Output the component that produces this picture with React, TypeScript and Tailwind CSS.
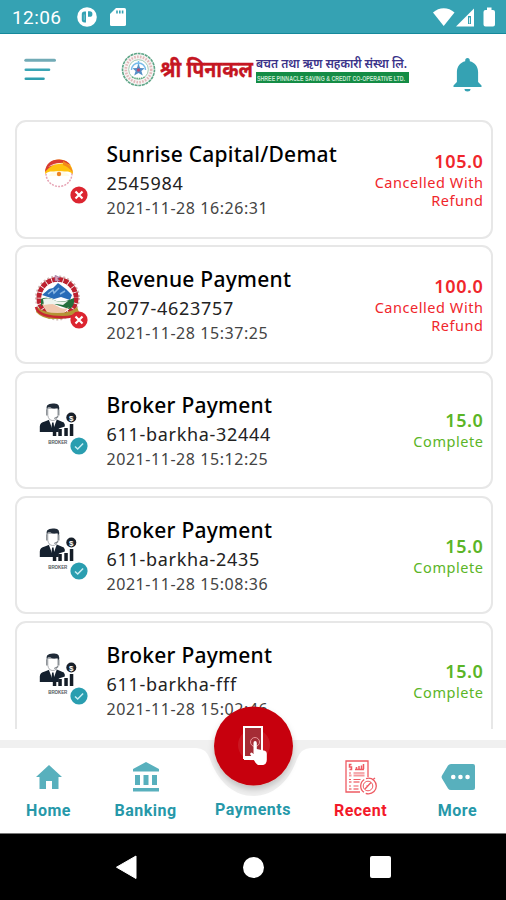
import React from "react";

type Kind = "sunrise" | "revenue" | "broker";
type Payment = { kind: Kind; title: string; account: string; date: string; amount: string; status: string };

const payments: Payment[] = [
  { kind: "sunrise", title: "Sunrise Capital/Demat", account: "2545984", date: "2021-11-28 16:26:31", amount: "105.0", status: "Cancelled With Refund" },
  { kind: "revenue", title: "Revenue Payment", account: "2077-4623757", date: "2021-11-28 15:37:25", amount: "100.0", status: "Cancelled With Refund" },
  { kind: "broker", title: "Broker Payment", account: "611-barkha-32444", date: "2021-11-28 15:12:25", amount: "15.0", status: "Complete" },
  { kind: "broker", title: "Broker Payment", account: "611-barkha-2435", date: "2021-11-28 15:08:36", amount: "15.0", status: "Complete" },
  { kind: "broker", title: "Broker Payment", account: "611-barkha-fff", date: "2021-11-28 15:02:46", amount: "15.0", status: "Complete" },
];

function StatusBar() {
  return (
    <div className="flex h-[34px] shrink-0 items-center border-b border-[#16899b] bg-[#35a2b3] pl-3 pr-[10px] text-white">
      <span className="w-[65px] pt-px font-['Roboto',sans-serif] text-[19px] leading-none tracking-[0.4px]">12:06</span>
      <svg width="20" height="20" viewBox="0 0 20 20">
        <circle cx="10" cy="10" r="9.8" fill="#fff" />
        <path d="M9 4.5H7.5A2.7 2.7 0 0 0 4.8 7.2v5.600a2.700 2.700 0 0 0 2.700 2.700H9z" fill="#35a2b3" />
        <path d="M6.800 7.500h.7v5.500h-.7z" fill="#fff" opacity=".5" />
        <path d="M11 4.200h1.800a2.600 2.600 0 0 1 2.600 2.600v.4a2.600 2.600 0 0 1-2.600 2.600H11z" fill="#35a2b3" />
      </svg>
      <svg className="ml-[13px]" width="16" height="18" viewBox="0 0 16 18">
        <path d="M6 0h8.400A1.600 1.600 0 0 1 16 1.600v14.800A1.600 1.600 0 0 1 14.400 18H1.600A1.600 1.600 0 0 1 0 16.400V6z" fill="#fff" />
        <path d="M6.200 2.500h1.600v3H6.200zM9 2.500h1.600v3H9zM11.800 2.500h1.600v3h-1.600z" fill="#35a2b3" />
      </svg>
      <svg className="ml-auto" width="64" height="20" viewBox="0 0 64 20">
        <path d="M1 5.500C7-.2 16.500-.2 22.500 5.500L11.700 19z" fill="#fff" />
        <path d="M42 1.500V19.500H24z" fill="#fff" />
        <path d="M36 9h3v8h-3z" fill="#35a2b3" />
        <path d="M37.200 10.500h.8v6h-.8z" fill="#fff" />
        <path d="M55 .5h4.500V3H61a2 2 0 0 1 2 2v12.500a2 2 0 0 1-2 2h-7.500a2 2 0 0 1-2-2V5a2 2 0 0 1 2-2H55z" fill="#fff" />
      </svg>
    </div>
  );
}

function Header() {
  return (
    <header className="flex h-[86px] shrink-0 items-start px-6">
      <svg className="mt-[24px] shrink-0" width="32" height="24" viewBox="0 0 32 24" strokeWidth="2.600" strokeLinecap="round">
        <path d="M1.800 2.300H30.500" stroke="#72abb6" strokeWidth="3" />
        <path d="M1.800 11.700H25" stroke="#3aa5b5" />
        <path d="M1.800 20.800H19.500" stroke="#2f9faf" />
      </svg>
      <svg className="ml-[65px] mt-[18px] shrink-0" width="35" height="35" viewBox="0 0 35 35" fill="none">
        <circle cx="17.500" cy="17.500" r="16" fill="#f6f5f4" stroke="#5fa688" strokeWidth="1.600" strokeDasharray="3 .7" />
        <circle cx="17.500" cy="17.500" r="12.700" stroke="#e2b7b9" strokeWidth="2.600" strokeDasharray="1.600 1.300" />
        <circle cx="17.500" cy="17.500" r="9.800" fill="#fff" stroke="#8fc0a5" strokeWidth=".8" />
        <path d="M10.500 18a7 7 0 0 1 14 0M17.500 9v5" stroke="#78bceb" strokeWidth="1.500" />
        <path d="m17.500 12 1.700 4 4.500.2-3.300 2.900 1.400 4.300-4.300-2.400-4.300 2.400 1.400-4.300-3.300-2.900 4.500-.2z" fill="#568fc7" />
        <circle cx="17.500" cy="18" r="1.700" fill="#b34f77" />
        <path d="M11 25q6.500 3 13 0" stroke="#62ad83" strokeWidth="1.500" strokeDasharray="1.500 .8" />
      </svg>
      <svg className="ml-1 mt-[18px] shrink-0" width="254" height="38" viewBox="0 0 254 38">
        <text x="0" y="25" fill="#c51622" stroke="#c51622" strokeWidth=".3" fontSize="23" fontWeight="700" textLength="93" lengthAdjust="spacingAndGlyphs" fontFamily="'Noto Sans Devanagari','Noto Sans','FreeSans',sans-serif">श्री पिनाकल</text>
        <text x="96" y="16" fill="#3a3289" fontSize="12" fontWeight="600" textLength="151" lengthAdjust="spacingAndGlyphs" fontFamily="'Noto Sans Devanagari','Noto Sans','FreeSans',sans-serif">बचत तथा ऋण सहकारी संस्था लि.</text>
        <rect x="96" y="20" width="153" height="11" fill="#148c45" />
        <text x="97" y="28.500" fill="#c4e6cf" fontSize="7.500" fontWeight="700" textLength="148" lengthAdjust="spacingAndGlyphs" fontFamily="'Liberation Sans',sans-serif">SHREE PINNACLE SAVING &amp; CREDIT CO-OPERATIVE LTD.</text>
      </svg>
      <svg className="ml-auto mt-[24px] shrink-0" width="29" height="34" viewBox="0 0 29 34" fill="#35a2b3">
        <path d="M14.500 0c1.500 0 2.300 1 2.300 2.500v.7c5 1.200 8.300 5.500 8.300 10.800V24l3.400 3.400V29H.5v-1.600L3.900 24V14c0-5.300 3.300-9.600 8.300-10.800v-.7C12.200 1 13 0 14.500 0zM11.500 31h6a3 2.500 0 0 1-6 0z" />
      </svg>
    </header>
  );
}

function Art({ kind }: { kind: Kind }) {
  if (kind === "sunrise")
    return (
      <svg width="60" height="60" viewBox="0 0 60 60" fill="none">
        <circle cx="30" cy="30.500" r="13" stroke="#e6a3b4" strokeWidth="1.500" strokeDasharray="2 1.200" />
        <path d="M16 31C16 22 22 16.500 30 16.500S44 22 44 31q-2-2-5-2.500H21q-3 .5-5 2.500z" fill="#ffc20e" />
        <path d="M16 29C16.500 21 22 16.500 30 16.500q8 0 12 6c-7-4.500-17-4-26 6.500z" fill="#d83b31" />
        <path d="M19 24q9-6.500 20-2.500-9-2.500-20 2.500z" fill="#fff" opacity=".8" />
        <path d="M34 18q8 3 10 12-4-6-10-8z" fill="#f38b1c" />
        <path d="M19.500 33C22 26.500 38 26.500 40.500 33z" fill="#fffbe8" />
        <circle cx="30" cy="31" r="2.200" fill="#ed8424" />
      </svg>
    );
  if (kind === "revenue")
    return (
      <svg width="60" height="60" viewBox="0 0 60 60" fill="none">
        <circle cx="28.500" cy="30" r="21" stroke="#d2b8b4" strokeWidth="3" strokeDasharray="2 2" />
        <circle cx="28.500" cy="30" r="18.500" stroke="#bd2230" strokeWidth="5" strokeDasharray="5 .8" />
        <circle cx="28.500" cy="30" r="16" fill="#fff" />
        <path d="m13 27 7-6 4-1 5-5 8 6 6 6-2 5-9-3-7 2-6-2z" fill="#286cb8" />
        <path d="m19 26 5-4 1 3 5-5M31 26l5-3" stroke="#8ab8e3" strokeWidth="1.500" />
        <path d="M12 31q6-3 13 1t20-2q1 9-5 11-9-3-15-5t-13 2z" fill="#246f3c" />
        <path d="M13 36q8-3 15 2t12 1l-6 7H19z" fill="#efc6ad" />
        <path d="M14 31q7-2 11 1t14 1l-5 4q-9-2-19 0z" fill="#eef4ee" />
        <path d="M8 39q7 6 20.500 6T48 39l2 5q-7 6-21.500 7T7 44z" fill="#b49535" />
        <path d="M7 39q2 9 21.500 10T47 44" stroke="#c72730" strokeWidth="2.500" />
        <path d="M26 7.500l5 2-3 1 3 2.500h-5z" fill="#e39daf" stroke="#7f66a1" strokeWidth=".6" />
      </svg>
    );
  return (
    <svg width="60" height="60" viewBox="0 0 60 60">
      <g transform="translate(.8 -4.500)">
        <path d="M10 42.500V37q0-4 5-5l5-2h7l7 3 1 2v2l-6 2v3.500z" fill="#15212f" />
        <path d="m19 30 4 11 4-11z" fill="#fff" />
        <path d="m22.300 33 1.500 0 .8 7-1.600 2-1.500-2z" fill="#15212f" />
        <path d="M18 19v7q1 5 5 5t5-5v-7z" fill="#fff" stroke="#9a9ea3" strokeWidth=".8" />
        <path d="M17 21q-2-7 6-7 8-1 6 7l-1.500-2.500q-4 1-7-.5L18 18z" fill="#202b38" />
        <path d="M17 20v6M29 20v6M28.500 27l-4 2" stroke="#777d83" strokeWidth="1.200" />
        <circle cx="41.500" cy="28" r="5" fill="#171f29" />
        <text x="41.500" y="31.200" fill="#fff" textAnchor="middle" fontSize="8" fontWeight="700" fontFamily="'Liberation Sans',sans-serif">$</text>
        <path d="M23 42h3.500v4.500H23zM28.500 39.500H32v7h-3.500zM34.500 38.500H38v8h-3.500zM40 34.500h3.500v12H40z" fill="#151d27" />
        <text x="18.500" y="54" fill="#555b61" fontSize="4.500" fontWeight="700" textLength="19" fontFamily="'Liberation Sans',sans-serif">BROKER</text>
      </g>
    </svg>
  );
}

function PaymentCard({ p }: { p: Payment }) {
  const done = p.status === "Complete";
  return (
    <article className="flex h-[118.500px] shrink-0 rounded-[11px] border-2 border-[#e7e7e7] bg-white font-['Noto_Sans','Open_Sans',sans-serif]">
      <div className="relative ml-[12px] mt-[21px] h-[62px] w-[78px] shrink-0">
        <Art kind={p.kind} />
        <svg className="absolute left-[41px] top-[43px]" width="18" height="18" viewBox="0 0 18 18">
          <circle cx="9" cy="9" r="8.600" fill={done ? "#2a9eb0" : "#dc2530"} />
          {done ? (
            <path d="m5 9.500 2.700 2.500 5.400-5.500" fill="none" stroke="#c9eef4" strokeWidth="1.500" />
          ) : (
            <path d="m5.500 5.500 7 7m0-7-7 7" stroke="#fff" strokeWidth="2.200" />
          )}
        </svg>
      </div>
      <div className="flex flex-col whitespace-nowrap pt-[17px] text-black">
        <h2 className="text-[21px] font-medium leading-[30px] tracking-[0.25px]">{p.title}</h2>
        <p className="text-[18px] leading-[28px] tracking-[0.7px] text-[#222]">{p.account}</p>
        <p className="text-[16px] leading-[22px] tracking-[0.55px] text-[#444]">{p.date}</p>
      </div>
      <div className={"ml-auto mr-[7px] flex w-[125px] flex-col justify-center text-right " + (done ? "text-[#5bb527]" : "text-[#f0262c]")}>
        <strong className="text-[18px] font-semibold leading-[23px] tracking-[0.600px]">{p.amount}</strong>
        <span className="text-[14.500px] leading-[18px] tracking-[0.55px]">{p.status}</span>
      </div>
    </article>
  );
}

function NavItem({ label, icon, active, width }: { label: string; icon: React.ReactNode; active?: boolean; width: string }) {
  return (
    <div className={"flex flex-col items-center " + width + (active ? " text-[#f31929]" : " text-[#2698a9]")}>
      <div className="flex h-[46px] items-center justify-center">{icon}</div>
      <span className="mt-px text-[16px] font-bold leading-[20px] tracking-[0.5px]">{label}</span>
    </div>
  );
}

function BottomNav() {
  return (
    <nav className="relative h-[93px] shrink-0 font-['Roboto',sans-serif]">
      <svg className="absolute left-0 top-0" width="506" height="93" viewBox="0 0 506 93">
        <defs>
          <filter id="fabShade" x="-20%" y="-20%" width="140%" height="150%">
            <feDropShadow dx="0" dy="4" stdDeviation="3" floodOpacity=".2" />
          </filter>
        </defs>
        <path d="M0 0H506V93H0z" fill="#f0f0f0" />
        <path d="M0 8H196Q206 8 210 19C218 42 234 56 253.500 56S289 42 297 19Q301 8 311 8H506V93H0z" fill="#fff" />
      </svg>
      <svg className="absolute left-[204px] top-[-44px]" width="100" height="108" viewBox="0 0 100 108">
        <circle cx="49.500" cy="50" r="39.500" fill="#c70009" filter="url(#fabShade)" />
        <circle cx="50" cy="49" r="16" fill="#d34a4f" opacity=".3" />
        <path d="M40 31h18v31H40z" fill="#a52c35" stroke="#fff" strokeWidth="2" />
        <path d="M40 60h11v4H40z" fill="#fff" />
        <circle cx="51" cy="46" r="4.500" fill="none" stroke="#e79498" strokeWidth="1" />
        <path d="M49.500 47q0-2 1.600-2t1.700 2v6l8 1.800q2 .6 2 3V64q0 4-3.500 5H54q-2-1-3.500-4L46 58q1-3 3.500 0z" fill="#fff" />
      </svg>
      <div className="relative flex h-full pt-[14px]">
        <NavItem width="w-[97px]" label="Home" icon={<svg width="28" height="28" viewBox="0 0 28 28"><path d="M14 2 1 14h3.500v12H11v-8h6v8h6.500V14H27z" fill="#58b0bd" /></svg>} />
        <NavItem width="w-[97px]" label="Banking" icon={<svg width="28" height="32" viewBox="0 0 28 32"><path d="M14 1 1 8v2.500h26V8zM3 14h5v10H3zM11.500 14h5v10h-5zM20 14h5v10h-5zM1 27h26v3.500H1z" fill="#58b0bd" /></svg>} />
        <div className="flex w-[118px] flex-col items-center pt-[46px] text-[16px] font-bold leading-[20px] tracking-[0.5px] text-[#2698a9]">Payments</div>
        <NavItem width="w-[97px]" label="Recent" active icon={
          <svg width="34" height="36" viewBox="0 0 34 36" fill="none" stroke="#ee5b63" strokeWidth="1.300">
            <path d="M24 18V2H2v31h14" />
            <path d="M7.500 5.500H5.500v2.500h2v2.500h-2" strokeWidth="1.500" />
            <path d="M11 10.500h9M12.500 10V8m2.500 2V7m2.500 3V6.500m2 3.500V5" strokeWidth="1.500" />
            <path d="M5 14h2M9.500 14h11M5 20.500h2M9.500 20.500h7M5 27h2M9.500 27h5" strokeWidth="1.200" />
            <path d="M5 16.500h2.500M9.500 16.500h11M5 23h2.500M9.500 23h6M5 30h2.500M9.500 30h5" stroke="#f5999e" strokeWidth="2.200" />
            <circle cx="24.500" cy="27" r="7.800" fill="#fff" strokeDasharray="15 2" />
            <circle cx="24" cy="27" r="4.800" strokeWidth="1" />
            <path d="m21 30 6-6.500M24 27h-1.500M29 20.500l2-1.500" />
          </svg>} />
        <NavItem width="w-[97px]" label="More" icon={<svg width="34" height="26" viewBox="0 0 34 26"><path d="M10 0H32q2 0 2 2V24q0 2-2 2H10q-2 0-3-1.500L1 14.500q-1-1.500 0-3L7 1.500Q8 0 10 0z" fill="#58b0bd" /><path d="M12.200 13h.1m7.100 0h.1m7 0h.1" stroke="#fff" strokeWidth="4.500" strokeLinecap="round" /></svg>} />
      </div>
    </nav>
  );
}

export default function App() {
  return (
    <main className="flex h-[900px] w-[506px] flex-col overflow-hidden bg-white">
      <StatusBar />
      <Header />
      <section className="flex h-[609px] shrink-0 flex-col gap-[6.800px] overflow-hidden pl-[14.500px] pr-[13.500px]">
        {payments.map((p) => <PaymentCard key={p.date} p={p} />)}
      </section>
      <div className="h-[11px] shrink-0 bg-white" />
      <BottomNav />
      <footer className="flex h-[67px] shrink-0 items-center border-t border-[#777] bg-black pl-[115px]">
        <svg width="22" height="26" viewBox="0 0 22 26"><path d="M21 2v22.500L1.500 13.200z" fill="#fff" stroke="#fff" strokeWidth="1" strokeLinejoin="round" /></svg>
        <div className="ml-[106px] h-[21px] w-[21px] rounded-full bg-white" />
        <div className="ml-[106px] h-[22px] w-[21px] rounded-[2px] bg-white" />
      </footer>
    </main>
  );
}
